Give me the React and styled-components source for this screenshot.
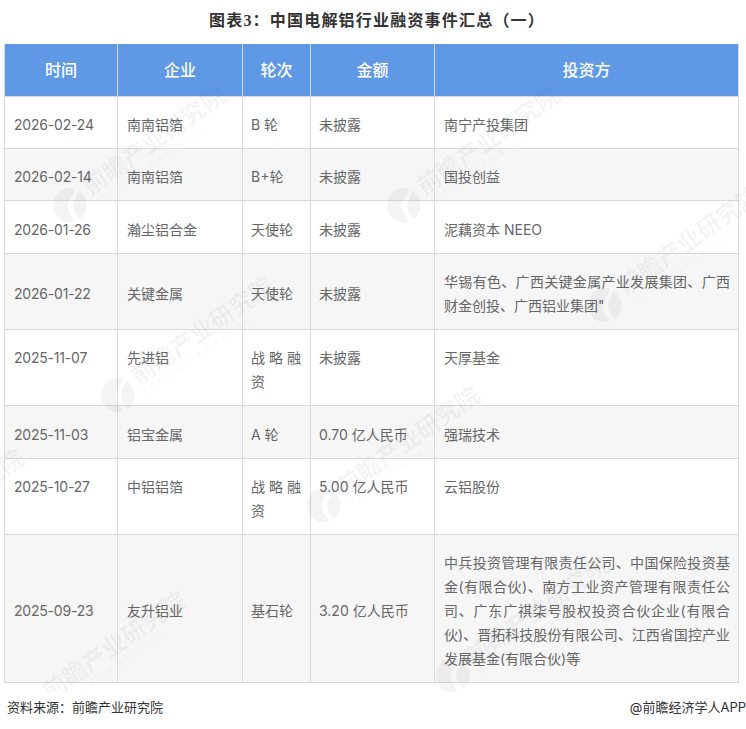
import React from 'react';
import styled, { createGlobalStyle } from 'styled-components';

const sansStack = '"Inter", "Noto Sans CJK SC", sans-serif';

const GlobalStyle = createGlobalStyle`
  html, body {
    margin: 0;
    padding: 0;
    background: #fff;
  }
`;

const Page = styled.div`
  position: relative;
  width: 746px;
  height: 729px;
  overflow: hidden;
  font-family: ${sansStack};
`;

const Title = styled.h1`
  margin: 0;
  height: 44px;
  padding: 10px 0 0 8px;
  box-sizing: border-box;
  text-align: center;
  font-family: "Liberation Serif", "Noto Sans CJK SC", serif;
  font-size: 16px;
  line-height: 22px;
  font-weight: 700;
  letter-spacing: 1.2px;
  color: #333;
`;

const Table = styled.table`
  width: 734px;
  margin-left: 4px;
  border-collapse: collapse;
  table-layout: fixed;
`;

const HeadCell = styled.th`
  height: 52px;
  padding: 0 0 2px;
  box-sizing: border-box;
  background: #5f99e6;
  border: 1px solid #d9d9d9;
  border-top: 0;
  border-bottom: 0;
  color: #fff;
  font-size: 16px;
  font-weight: 500;
  text-align: center;
`;

const Row = styled.tr`
  background: ${(p) => (p.$shaded ? '#f6f6f6' : '#fff')};
  height: ${(p) => p.$height}px;
`;

const Cell = styled.td`
  padding: 16.5px 9px 10.5px 9px;
  box-sizing: border-box;
  border: 1px solid #d9d9d9;
  color: #666;
  font-size: 14px;
  line-height: 24px;
  text-align: justify;
  vertical-align: ${(p) => (p.$top ? 'top' : 'middle')};
  word-break: break-all;

  &:first-child {
    letter-spacing: -0.2px;
  }

  &:nth-child(3),
  &:nth-child(4) {
    padding-left: 8px;
  }

  &:last-child {
    padding-right: 8px;
  }
`;

const Footer = styled.div`
  display: flex;
  justify-content: space-between;
  align-items: center;
  height: 47px;
  padding-left: 7px;
  font-size: 13px;
  color: #333;
`;

const WatermarkLayer = styled.div`
  position: absolute;
  inset: 0 0 37px;
  overflow: hidden;
  pointer-events: none;
`;

const Mark = styled.div`
  position: absolute;
  left: ${(p) => p.$x}px;
  top: ${(p) => p.$y}px;
  display: flex;
  align-items: center;
  gap: 4px;
  transform: rotate(-35deg);
  transform-origin: 18px 18px;
  color: rgba(60, 70, 90, 0.06);
  white-space: nowrap;
`;

const MarkName = styled.div`
  font-size: 24px;
  line-height: 26px;
  font-weight: 700;
`;

const MarkSub = styled.div`
  font-size: 7px;
  line-height: 9px;
  letter-spacing: 1px;
`;

const columns = [
  { label: '时间', width: 113 },
  { label: '企业', width: 125 },
  { label: '轮次', width: 68 },
  { label: '金额', width: 124 },
  { label: '投资方', width: 304 },
];

const rows = [
  { cells: ['2026-02-24', '南南铝箔', 'B 轮', '未披露', '南宁产投集团'], height: 52 },
  { cells: ['2026-02-14', '南南铝箔', 'B+轮', '未披露', '国投创益'], height: 52 },
  { cells: ['2026-01-26', '瀚尘铝合金', '天使轮', '未披露', '泥藕资本 NEEO'], height: 53 },
  {
    cells: ['2026-01-22', '关键金属', '天使轮', '未披露', '华锡有色、广西关键金属产业发展集团、广西财金创投、广西铝业集团"'],
    height: 76,
  },
  { cells: ['2025-11-07', '先进铝', '战略融资', '未披露', '天厚基金'], height: 76, top: true },
  { cells: ['2025-11-03', '铝宝金属', 'A 轮', '0.70 亿人民币', '强瑞技术'], height: 53 },
  { cells: ['2025-10-27', '中铝铝箔', '战略融资', '5.00 亿人民币', '云铝股份'], height: 76, top: true },
  {
    cells: [
      '2025-09-23',
      '友升铝业',
      '基石轮',
      '3.20 亿人民币',
      '中兵投资管理有限责任公司、中国保险投资基金(有限合伙)、南方工业资产管理有限责任公司、广东广祺柒号股权投资合伙企业(有限合伙)、晋拓科技股份有限公司、江西省国控产业发展基金(有限合伙)等',
    ],
    height: 148,
  },
];

// logo corner of each repeated watermark
const marks = [
  [52, 187],
  [386, 187],
  [100, 377],
  [587, 287],
  [306, 487],
  [435, 657],
  [12, 692],
  [-150, 550],
];

const MarkLogo = () => (
  <svg width="36" height="36" viewBox="0 0 36 36" fill="currentColor">
    <path d="M18 1a17 17 0 0 1 14 7L20 14c-6 2-8 8-7 20C5 32 1 26 1 18 1 9 9 1 18 1z" />
    <path d="M33 11a17 17 0 0 1-15 24c-1-10 1-16 7-19z" />
  </svg>
);

const Watermark = ({ x, y }) => (
  <Mark $x={x} $y={y}>
    <MarkLogo />
    <div>
      <MarkName>前瞻产业研究院</MarkName>
      <MarkSub>中国产业咨询领导者(股票 839599)</MarkSub>
    </div>
  </Mark>
);

export default function App() {
  return (
    <Page>
      <GlobalStyle />
      <Title>图表3：中国电解铝行业融资事件汇总（一）</Title>
      <Table>
        <colgroup>
          {columns.map((col) => (
            <col key={col.label} style={{ width: col.width }} />
          ))}
        </colgroup>
        <thead>
          <tr>
            {columns.map((col) => (
              <HeadCell key={col.label}>{col.label}</HeadCell>
            ))}
          </tr>
        </thead>
        <tbody>
          {rows.map((row, i) => (
            <Row key={row.cells[0]} $shaded={i % 2 === 1} $height={row.height}>
              {row.cells.map((text, j) => (
                <Cell key={j} $top={row.top}>{text}</Cell>
              ))}
            </Row>
          ))}
        </tbody>
      </Table>
      <Footer>
        <span>资料来源：前瞻产业研究院</span>
        <span>@前瞻经济学人APP</span>
      </Footer>
      <WatermarkLayer>
        {marks.map(([x, y]) => (
          <Watermark key={`${x}-${y}`} x={x} y={y} />
        ))}
      </WatermarkLayer>
    </Page>
  );
}
